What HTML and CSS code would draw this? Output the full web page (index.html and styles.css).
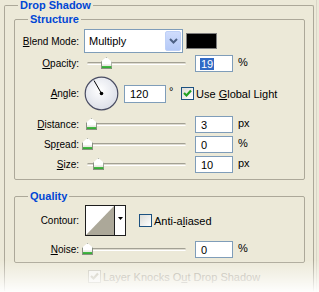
FILE: index.html
```html
<!DOCTYPE html>
<html lang="en">
<head>
    <meta charset="UTF-8">
    <title>Drop Shadow</title>
    <link rel="stylesheet" href="styles.css">
</head>
<body>
    <fieldset class="group outer">
        <legend>Drop Shadow</legend>
        <fieldset class="group">
            <legend>Structure</legend>
            <div class="row blend">
                <span class="lbl"><u>B</u>lend Mode:</span>
                <div class="select">
                    <span class="select-text">Multiply</span>
                    <span class="select-btn">
                        <svg width="9" height="6" viewBox="0 0 9 6"><polyline points="1,1 4.5,4.5 8,1" fill="none" stroke="#4d6185" stroke-width="2"/></svg>
                    </span>
                </div>
                <span class="swatch"></span>
            </div>
            <div class="row opacity">
                <span class="lbl"><u>O</u>pacity:</span>
                <div class="slider"><div class="track"><span class="thumb" style="left:19%"></span></div></div>
                <span class="field"><span class="sel">19</span></span>
                <span class="unit">%</span>
            </div>
            <div class="row angle">
                <span class="lbl"><u>A</u>ngle:</span>
                <svg class="dial" width="35" height="35" viewBox="0 0 35 35">
                    <defs>
                        <radialGradient id="dialbg" cx="45%" cy="40%" r="60%">
                            <stop offset="0" stop-color="#ffffff"/>
                            <stop offset="1" stop-color="#dcdfe8"/>
                        </radialGradient>
                    </defs>
                    <circle cx="17.5" cy="17.5" r="16.3" fill="url(#dialbg)" stroke="#4a4d63" stroke-width="1.2"/>
                    <line x1="17.5" y1="17.5" x2="10" y2="4.5" stroke="#000" stroke-width="1"/>
                    <circle cx="17.5" cy="17.5" r="1.8" fill="#000"/>
                </svg>
                <span class="field wide">120</span>
                <span class="deg">°</span>
                <span class="check on"><svg width="11" height="11" viewBox="0 0 11 11"><polyline points="2,5 4.5,7.5 9,2.5" fill="none" stroke="#21a121" stroke-width="2.2"/></svg></span>
                <span class="check-text">Use <u>G</u>lobal Light</span>
            </div>
            <div class="row distance">
                <span class="lbl"><u>D</u>istance:</span>
                <div class="slider"><div class="track"><span class="thumb" style="left:4%"></span></div></div>
                <span class="field">3</span>
                <span class="unit">px</span>
            </div>
            <div class="row spread">
                <span class="lbl">Sp<u>r</u>ead:</span>
                <div class="slider"><div class="track"><span class="thumb" style="left:0%"></span></div></div>
                <span class="field">0</span>
                <span class="unit">%</span>
            </div>
            <div class="row size">
                <span class="lbl"><u>S</u>ize:</span>
                <div class="slider"><div class="track"><span class="thumb" style="left:11%"></span></div></div>
                <span class="field">10</span>
                <span class="unit">px</span>
            </div>
        </fieldset>
        <fieldset class="group quality">
            <legend>Quality</legend>
            <div class="row contour">
                <span class="lbl">Contour:</span>
                <svg class="curve" width="41" height="31" viewBox="0 0 41 31">
                    <rect x="0.5" y="0.5" width="40" height="30" fill="#fff" stroke="#1e1e1e"/>
                    <polygon points="1,30 29,1 29,30" fill="#aca899"/>
                    <line x1="29.5" y1="1" x2="29.5" y2="30" stroke="#1e1e1e"/>
                    <polygon points="33,12 38,12 35.5,15" fill="#000"/>
                </svg>
                <span class="check"></span>
                <span class="check-text">Anti-a<u>l</u>iased</span>
            </div>
            <div class="row noise">
                <span class="lbl"><u>N</u>oise:</span>
                <div class="slider"><div class="track"><span class="thumb" style="left:0%"></span></div></div>
                <span class="field">0</span>
                <span class="unit">%</span>
            </div>
        </fieldset>
        <div class="knockout">
            <span class="check on off"><svg width="11" height="11" viewBox="0 0 11 11"><polyline points="2,5 4.5,7.5 9,2.5" fill="none" stroke="#c8c5b5" stroke-width="2.2"/></svg></span>
            <span class="check-text">Layer Knocks O<u>u</u>t Drop Shadow</span>
        </div>
    </fieldset>
    <div class="fade"></div>
</body>
</html>
```

FILE: styles.css
```css
*{
    margin: 0;
    padding: 0;
    box-sizing: border-box;
}
body{
    width: 319px;
    height: 292px;
    overflow: hidden;
    position: relative;
    background: linear-gradient(to right, #ece9d8 316px, #d9d6c8 316px, #d9d6c8 317px, #ece9d8 317px);
    font: 10px "Liberation Sans", Arial, sans-serif;
    color: #000;
}
.group{
    border: 1px solid #aca899;
    border-radius: 2px;
    width: 291px;
    padding: 4px 0 6px 0;
}
.group legend{
    font-size: 11px;
    font-weight: bold;
    line-height: 11px;
    color: #0046d5;
    padding: 0 2px;
    margin-left: 13px;
}
.outer{
    width: 310px;
    height: 292px;
    margin-left: 4px;
    padding: 3px 8px 0 9px;
    border-bottom-color: transparent;
}
.outer > legend{
    margin-left: 4px;
}
.quality{
    margin-top: 11px;
    padding: 3px 0 4px 0;
}
.row{
    display: flex;
    align-items: center;
    height: 17px;
}
.lbl{
    width: 64px;
    text-align: right;
    margin-right: 5px;
    white-space: nowrap;
}
.blend{
    height: 24px;
}
.opacity{
    margin-top: 2px;
}
.angle{
    height: 35px;
    margin-top: 4px;
}
.distance{
    margin-top: 5px;
}
.spread, .size{
    margin-top: 3px;
}
.select{
    width: 99px;
    height: 24px;
    border: 1px solid #7f9db9;
    background: #fff;
    display: flex;
    align-items: center;
    justify-content: space-between;
    padding: 1px;
}
.select-text{
    font-size: 11px;
    padding-left: 3px;
}
.select-btn{
    width: 16px;
    height: 20px;
    background: linear-gradient(#cfdcfc, #b4c9f7);
    border: 1px solid #bed0f7;
    border-radius: 2px;
    display: flex;
    align-items: center;
    justify-content: center;
}
.swatch{
    width: 31px;
    height: 16px;
    margin-left: 3px;
    background: #000;
    border: 1px solid #7d7d7d;
}
.slider{
    width: 111px;
    padding-left: 3px;
}
.track{
    position: relative;
    width: 99px;
    height: 3px;
    border-top: 1px solid #a3a194;
    border-bottom: 1px solid #fff;
    background: #dedbd0;
    border-radius: 2px;
}
.thumb{
    position: absolute;
    top: -6px;
    margin-left: -5px;
    width: 11px;
    height: 12px;
    background: linear-gradient(#ffffff 60%, #f3f3ef 60%, #e6e6e0 75%, #4cba4c 75%, #21a121);
    clip-path: polygon(50% 0, 100% 40%, 100% 100%, 0 100%, 0 40%);
}
.thumb::after{
    content: "";
    position: absolute;
    inset: 0;
    border: 1px solid #8a9182;
    clip-path: polygon(50% 0, 100% 40%, 100% 100%, 0 100%, 0 40%);
}
.field{
    width: 38px;
    height: 17px;
    border: 1px solid #7f9db9;
    background: #fff;
    padding-left: 5px;
    display: flex;
    align-items: center;
    font-size: 11px;
}
.field.wide{
    width: 42px;
    height: 18px;
    margin-left: 5px;
}
.sel{
    background: #316ac5;
    color: #fff;
    padding: 0 1px;
    margin-left: -1px;
}
.unit{
    margin-left: 5px;
    margin-top: -4px;
    font-size: 11px;
}
.deg{
    width: 15px;
    padding-left: 3px;
    margin-top: -6px;
    font-size: 11px;
}
.check{
    width: 13px;
    height: 13px;
    border: 1px solid #1c5180;
    background: linear-gradient(135deg, #dcdcd7, #ffffff);
    display: flex;
    align-items: center;
    justify-content: center;
}
.check.off{
    border-color: #c9c7ba;
    background: #f4f3ee;
}
.check-text{
    margin-left: 2px;
    font-size: 11px;
    white-space: nowrap;
}
.contour{
    height: 31px;
}
.contour .lbl{
    margin-right: 6px;
}
.contour .check{
    margin-left: 13px;
}
.noise{
    margin-top: 5px;
}
.knockout{
    display: flex;
    align-items: center;
    margin-top: 7px;
    padding-left: 74px;
    color: #aca899;
}
.fade{
    position: absolute;
    left: 0;
    right: 0;
    top: 260px;
    height: 32px;
    background: linear-gradient(rgba(255,255,255,0), rgba(255,255,255,0.45) 50%, rgba(255,255,255,0.95));
    pointer-events: none;
}
```
